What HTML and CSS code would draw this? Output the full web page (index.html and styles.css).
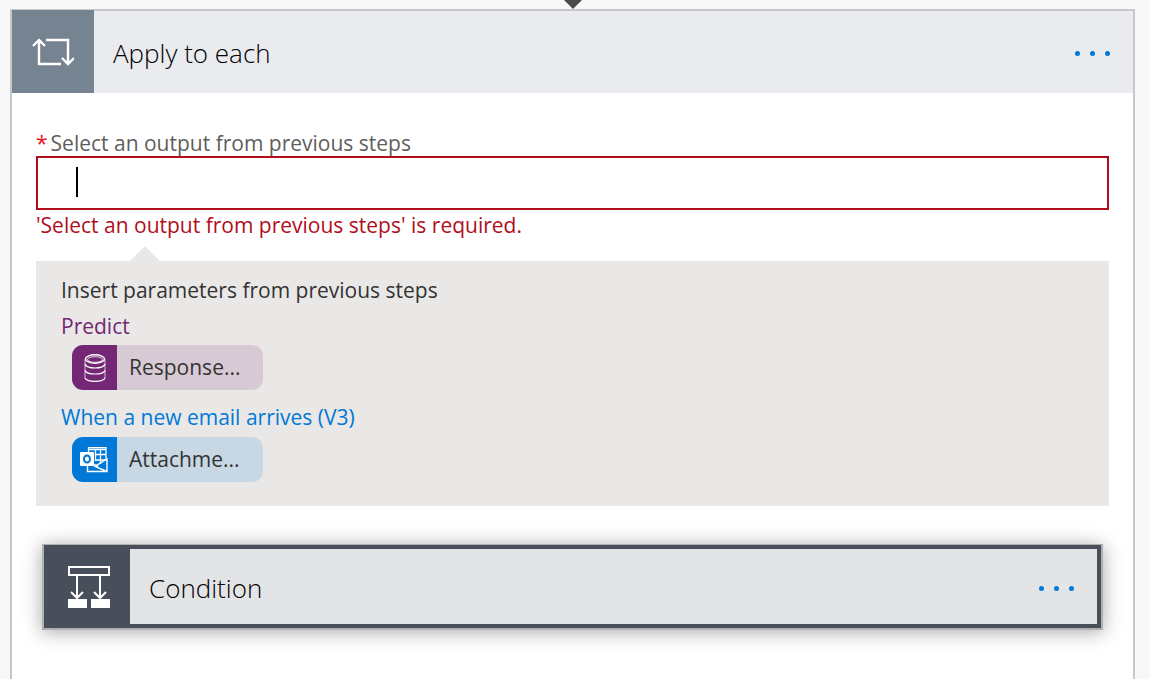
FILE: index.html
```html
<!DOCTYPE html>
<html lang="en">
<head>
<meta charset="utf-8">
<meta name="viewport" content="width=device-width, initial-scale=1">
<title>Apply to each</title>
<link rel="stylesheet" href="styles.css">
</head>
<body>
<div class="connector">
  <svg width="20" height="9" viewBox="0 0 20 9" aria-hidden="true"><path d="M1 0H19L10 9Z" fill="#4a4a4a"/></svg>
</div>
<main class="card">
  <header class="card-header">
    <div class="card-icon">
      <svg width="42" height="28" viewBox="0 0 42 28" fill="none" stroke="#fff" stroke-width="2.400" aria-hidden="true">
        <path d="M7 2V26H29M1 8L7 2L13 8M14 2H36V26M30 20L36 26L42 20"/>
      </svg>
    </div>
    <h1 class="title">Apply to each</h1>
    <button class="menu" type="button" aria-label="Apply to each menu"><span class="dot"></span><span class="dot"></span><span class="dot"></span></button>
  </header>
  <div class="card-body">
    <label class="label" for="output"><span class="required">*</span>Select an output from previous steps</label>
    <div class="field">
      <input class="input" id="output" type="text" aria-invalid="true" aria-describedby="output-error">
      <span class="caret"></span>
    </div>
    <p class="error" id="output-error">'Select an output from previous steps' is required.</p>
    <section class="panel">
      <p class="panel-line">Insert parameters from previous steps</p>
      <h2 class="panel-line predict">Predict</h2>
      <button class="token token-predict" type="button">
        <span class="token-icon">
          <svg width="22" height="28" viewBox="0 0 22 28" fill="none" stroke="#fff" aria-hidden="true">
            <ellipse cx="11" cy="5" rx="9.500" ry="4.200" stroke-width="1.400"/>
            <ellipse cx="11" cy="5.500" rx="7.500" ry="2.800" stroke-width=".8"/>
            <path d="M1 5V24M21 5V24" stroke-width=".7"/>
            <path d="M1 10C2 13 6 14 11 14S20 13 21 10M1 16.500C2 19 6 20 11 20S20 19 21 16.500M1 24C2 26.500 6 27.300 11 27.300S20 26.500 21 24" stroke-width="1.200"/>
          </svg>
        </span>
        <span class="token-text">Response...</span>
      </button>
      <h2 class="panel-line email">When a new email arrives (V3)</h2>
      <button class="token token-email" type="button">
        <span class="token-icon">
          <svg width="28" height="26" viewBox="0 0 28 26" fill="none" stroke="#fff" aria-hidden="true">
            <path d="M8.500 6V.5H26V13M8 2.500H26M15 7.500H26M15 13H26M15.500 3V14M20.500 3V17" stroke-width="1.300"/>
            <path d="M7.500 19V24.500H27V12L15 19.500L27 24.500M14 17.500L18 19.500" stroke-width="1.400"/>
            <rect x="0" y="5" width="14" height="14" rx="1" fill="#fff" stroke="none"/>
            <ellipse cx="7" cy="12" rx="3" ry="3.500" stroke="#0078d7" stroke-width="2"/>
          </svg>
        </span>
        <span class="token-text">Attachme...</span>
      </button>
    </section>
    <section class="condition">
      <div class="condition-icon">
        <svg width="42" height="42" viewBox="0 0 42 42" fill="none" stroke="#fff" stroke-width="2" aria-hidden="true">
          <path d="M1 1H41V9H1ZM9 10V32M3 26L9 32L15 26M32 10V32M26 26L32 32L38 26"/>
          <path d="M0 33H19V42H0ZM23 33H42V42H23Z" fill="#fff" stroke="none"/>
        </svg>
      </div>
      <div class="condition-main">
        <h2 class="title">Condition</h2>
        <button class="menu" type="button" aria-label="Condition menu"><span class="dot"></span><span class="dot"></span><span class="dot"></span></button>
      </div>
    </section>
  </div>
</main>
</body>
</html>
```
FILE: styles.css
```css
* { box-sizing: border-box; }
body {
  margin: 0;
  min-height: 100vh;
  display: flex;
  flex-direction: column;
  padding: 0 15px 0 10px;
  background: #f8f8f8;
  color: #333;
  font: 21px/36px "Segoe UI", "Open Sans", "Noto Sans", sans-serif;
}
h1, h2, p { margin: 0; font-weight: 400; }
button { font: inherit; color: inherit; border: 0; padding: 0; cursor: pointer; }
svg { display: block; }
.connector { display: flex; justify-content: center; height: 9px; }
.card {
  flex: 1;
  background: #fff;
  border: 2px solid #c8c8c8;
  border-bottom: 0;
}
.card-header {
  display: flex;
  align-items: center;
  height: 82px;
  padding-right: 23px;
  background: #eaebef;
}
.card-icon {
  display: flex;
  align-items: center;
  justify-content: center;
  width: 82px;
  height: 83px;
  margin-bottom: 1px;
  background: #768491;
}
.title {
  flex: 1;
  padding: 2px 0 0 19px;
  color: #000;
  font-size: 26px;
  font-weight: 300;
}
.menu { display: flex; gap: 10px; padding: 11px 0 8px; background: none; }
.dot { width: 5px; height: 5px; border-radius: 50%; background: #0078d7; }
.card-body { padding: 37px 24px 48px; }
.label { display: block; line-height: 26px; color: #605e5c; }
.required { margin-right: 3px; color: #e81123; }
.field { position: relative; }
.input {
  display: block;
  width: 100%;
  height: 54px;
  padding: 0 38px;
  border: 2px solid #b10e1c;
  border-radius: 0;
  outline: 0;
  background: #fff;
  font: inherit;
}
.caret { position: absolute; left: 40px; top: 11px; width: 2px; height: 30px; background: #000; pointer-events: none; }
.error { line-height: 30px; color: #b10e1c; }
.panel {
  position: relative;
  margin-top: 21px;
  padding: 11px 25px 24px;
  background: #e9e8e6;
}
.panel::before {
  content: "";
  position: absolute;
  left: 94px;
  top: -15px;
  border: solid transparent;
  border-width: 0 15px 15px;
  border-bottom-color: #e9e8e6;
}
.panel-line { font-size: 21px; }
.predict { color: #742774; }
.email { margin-top: 9px; color: #0078d7; }
.token {
  display: flex;
  align-items: center;
  width: 191px;
  height: 45px;
  margin: 1px 0 0 11px;
  border-radius: 11px;
  overflow: hidden;
}
.email + .token { margin-top: 2px; }
.token-predict { background: #d8cad5; }
.token-email { background: #c7d7e4; }
.token-icon { display: flex; align-items: center; justify-content: center; width: 45px; height: 45px; }
.token-predict .token-icon { background: #742774; }
.token-email .token-icon { padding-right: 2px; background: #0078d7; }
.token-text { padding: 0 0 2px 12px; }
.condition {
  display: flex;
  margin: 38px 6px 0;
  border: 2px solid #b1b0b0;
  border-top-width: 1px;
  background: #484f5b;
  box-shadow: 0 2px 18px rgba(0, 0, 0, .35);
}
.condition-icon { display: flex; align-items: center; justify-content: center; width: 86px; padding-left: 3px; }
.condition-main {
  flex: 1;
  display: flex;
  align-items: center;
  height: 75px;
  margin: 4px 4px 4px 0;
  padding-right: 23px;
  background: #e3e4e6;
}
```
